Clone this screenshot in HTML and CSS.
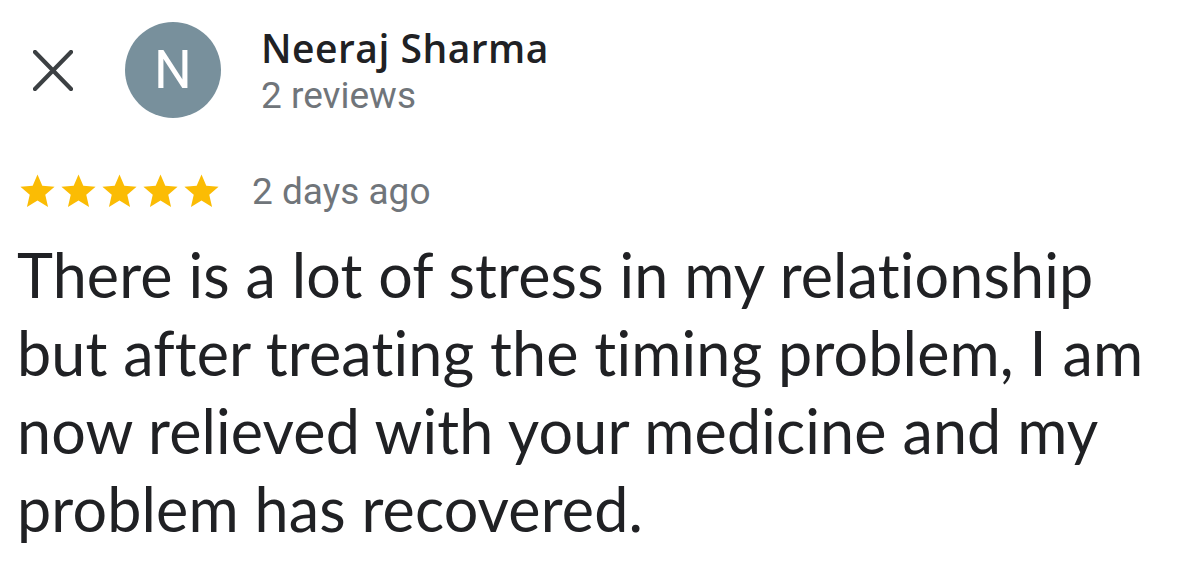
FILE: index.html
```html
<!DOCTYPE html>
<html lang="en">
<head>
<meta charset="utf-8">
<title>Review</title>
<link rel="stylesheet" href="styles.css">
</head>
<body>
<main class="review">
  <header class="review-head">
    <button class="close" aria-label="Close">
      <svg viewBox="0 0 40 41" width="40" height="41" aria-hidden="true">
        <path d="M2 2 L38 39 M38 2 L2 39" stroke="#3c4043" stroke-width="4.2" stroke-linecap="square" fill="none"/>
      </svg>
    </button>
    <div class="avatar">N</div>
    <div class="author">
      <div class="name">Neeraj Sharma</div>
      <div class="count">2 reviews</div>
    </div>
  </header>
  <div class="meta">
    <div class="stars" aria-label="5 stars">
      <svg viewBox="0 0 24 24" width="41" height="41"><path d="M12 17.27L18.18 21l-1.64-7.03L22 9.24l-7.19-.61L12 2 9.19 8.63 2 9.24l5.46 4.73L5.82 21z"/></svg>
      <svg viewBox="0 0 24 24" width="41" height="41"><path d="M12 17.27L18.18 21l-1.64-7.03L22 9.24l-7.19-.61L12 2 9.19 8.63 2 9.24l5.46 4.73L5.82 21z"/></svg>
      <svg viewBox="0 0 24 24" width="41" height="41"><path d="M12 17.27L18.18 21l-1.64-7.03L22 9.24l-7.19-.61L12 2 9.19 8.63 2 9.24l5.46 4.73L5.82 21z"/></svg>
      <svg viewBox="0 0 24 24" width="41" height="41"><path d="M12 17.27L18.18 21l-1.64-7.03L22 9.24l-7.19-.61L12 2 9.19 8.63 2 9.24l5.46 4.73L5.82 21z"/></svg>
      <svg viewBox="0 0 24 24" width="41" height="41"><path d="M12 17.27L18.18 21l-1.64-7.03L22 9.24l-7.19-.61L12 2 9.19 8.63 2 9.24l5.46 4.73L5.82 21z"/></svg>
    </div>
    <span class="date">2 days ago</span>
  </div>
  <p class="text">There is a lot of stress in my relationship but after treating the timing problem, I am now relieved with your medicine and my problem has recovered.</p>
</main>
</body>
</html>
```
FILE: styles.css
```css
html, body {
  margin: 0;
  padding: 0;
  background: #ffffff;
}

.review {
  width: 1195px;
  height: 562px;
  overflow: hidden;
  font-family: Roboto, "Liberation Sans", sans-serif;
  color: #202124;
}

.review-head {
  display: flex;
  align-items: center;
  padding: 22px 0 0 33px;
  height: 96px;
}

.close {
  display: block;
  width: 40px;
  height: 41px;
  padding: 0;
  border: 0;
  background: none;
}

.close svg {
  display: block;
}

.avatar {
  margin-left: 52px;
  width: 96px;
  height: 96px;
  border-radius: 50%;
  background: #78909c;
  color: #ffffff;
  display: flex;
  align-items: center;
  justify-content: center;
  font-size: 53px;
  line-height: 1;
}

.author {
  margin-left: 40px;
  display: flex;
  flex-direction: column;
  padding-top: 2px;
}

.name {
  font-family: "Open Sans", Roboto, sans-serif;
  font-weight: 600;
  font-size: 39px;
  letter-spacing: 0.5px;
  line-height: 50px;
  color: #202124;
}

.count {
  font-size: 37px;
  line-height: 46px;
  color: #70757a;
}

.meta {
  display: flex;
  align-items: center;
  margin-top: 53px;
  padding-left: 17px;
  height: 41px;
}

.stars {
  display: flex;
  fill: #fbbc04;
}

.stars svg {
  display: block;
}

.date {
  margin-left: 30px;
  font-size: 37px;
  color: #70757a;
}

.text {
  margin: 24px 0 0;
  padding-left: 17px;
  width: 1160px;
  font-family: Lato, "Noto Sans", sans-serif;
  font-size: 61px;
  letter-spacing: 0.15px;
  font-variant-ligatures: none;
  line-height: 78px;
  color: #202124;
}
```
